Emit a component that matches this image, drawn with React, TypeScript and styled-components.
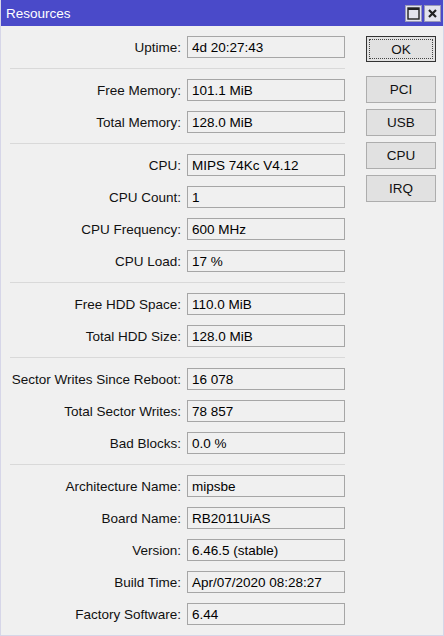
import styled, { createGlobalStyle } from "styled-components";

const Global = createGlobalStyle`
  html, body {
    margin: 0;
    padding: 0;
    background: #f0f0f0;
  }
  body {
    font-family: "Liberation Sans", Arial, sans-serif;
    font-size: 13.5px;
    color: #111;
  }
`;

// 창 전체
const Window = styled.div`
  width: 444px;
  height: 636px;
  display: flex;
  flex-direction: column;
  background: #f0f0f0;
  box-sizing: border-box;
  border-left: 1px solid #d6d6e8;
  border-right: 1px solid #d6d6e8;
  border-bottom: 1px solid #d6d6e8;
  overflow: hidden;
`;

const TitleBar = styled.div`
  height: 26px;
  background: #4a4ac9;
  display: flex;
  align-items: center;
  justify-content: space-between;
  padding: 0 2px 0 5px;
  flex-shrink: 0;
`;

const Title = styled.span`
  color: #fff;
  font-size: 13.5px;
`;

const Caps = styled.div`
  display: flex;
  gap: 2px;
`;

const CapBtn = styled.div`
  width: 17px;
  height: 17px;
  box-sizing: border-box;
  background: #e4e4ee;
  border: 1px solid #9a9ab8;
  display: flex;
  align-items: center;
  justify-content: center;
`;

const Body = styled.div`
  display: flex;
  padding: 10px 8px 0 9px;
  gap: 21px;
`;

const Form = styled.div`
  width: 335px;
  display: flex;
  flex-direction: column;
`;

const Group = styled.div`
  display: flex;
  flex-direction: column;
  gap: 10px;
`;

const Separator = styled.div`
  height: 1px;
  background: #d9d9d9;
  margin: 10px 0 10px;
`;

const Row = styled.div`
  display: flex;
  align-items: center;
  height: 22px;
`;

const Label = styled.div`
  width: 177px;
  text-align: right;
  padding-right: 6px;
  box-sizing: border-box;
  white-space: nowrap;
`;

const Field = styled.div`
  width: 158px;
  height: 22px;
  box-sizing: border-box;
  border: 1px solid #a6a6a6;
  background: #f0f0f0;
  padding: 0 4px;
  display: flex;
  align-items: center;
  white-space: nowrap;
  color: #000;
`;

const Side = styled.div`
  display: flex;
  flex-direction: column;
  gap: 6px;
`;

const Button = styled.div<{ primary?: boolean }>`
  width: 70px;
  height: ${(p) => (p.primary ? "26px" : "27px")};
  box-sizing: border-box;
  border: 1px solid ${(p) => (p.primary ? "#333" : "#adadad")};
  background: #e1e1e1;
  display: flex;
  align-items: center;
  justify-content: center;
  position: relative;
  margin-bottom: ${(p) => (p.primary ? "8px" : "0")};
  &:after {
    content: "";
    display: ${(p) => (p.primary ? "block" : "none")};
    position: absolute;
    inset: 2px;
    border: 1px dotted #444;
  }
`;

const groups: [string, string][][] = [
  [["Uptime:", "4d 20:27:43"]],
  [
    ["Free Memory:", "101.1 MiB"],
    ["Total Memory:", "128.0 MiB"],
  ],
  [
    ["CPU:", "MIPS 74Kc V4.12"],
    ["CPU Count:", "1"],
    ["CPU Frequency:", "600 MHz"],
    ["CPU Load:", "17 %"],
  ],
  [
    ["Free HDD Space:", "110.0 MiB"],
    ["Total HDD Size:", "128.0 MiB"],
  ],
  [
    ["Sector Writes Since Reboot:", "16 078"],
    ["Total Sector Writes:", "78 857"],
    ["Bad Blocks:", "0.0 %"],
  ],
  [
    ["Architecture Name:", "mipsbe"],
    ["Board Name:", "RB2011UiAS"],
    ["Version:", "6.46.5 (stable)"],
    ["Build Time:", "Apr/07/2020 08:28:27"],
    ["Factory Software:", "6.44"],
  ],
];

const App = () => {
  return (
    <>
      <Global />
      <Window>
        <TitleBar>
          <Title>Resources</Title>
          <Caps>
            <CapBtn>
              <svg width="13" height="13" viewBox="0 0 13 13">
                <rect x="1" y="1" width="11" height="11" fill="none" stroke="#222" strokeWidth="1.4" />
                <rect x="1" y="1" width="11" height="2" fill="#222" />
              </svg>
            </CapBtn>
            <CapBtn>
              <svg width="11" height="11" viewBox="0 0 11 11">
                <path d="M2,2 L9,9 M2,9 L9,2" stroke="#222" strokeWidth="2.2" />
              </svg>
            </CapBtn>
          </Caps>
        </TitleBar>
        <Body>
          <Form>
            {groups.map((g, i) => (
              <div key={i}>
                {i > 0 && <Separator />}
                <Group>
                  {g.map(([label, value]) => (
                    <Row key={label}>
                      <Label>{label}</Label>
                      <Field>{value}</Field>
                    </Row>
                  ))}
                </Group>
              </div>
            ))}
          </Form>
          <Side>
            <Button primary>OK</Button>
            <Button>PCI</Button>
            <Button>USB</Button>
            <Button>CPU</Button>
            <Button>IRQ</Button>
          </Side>
        </Body>
      </Window>
    </>
  );
};

export default App;
